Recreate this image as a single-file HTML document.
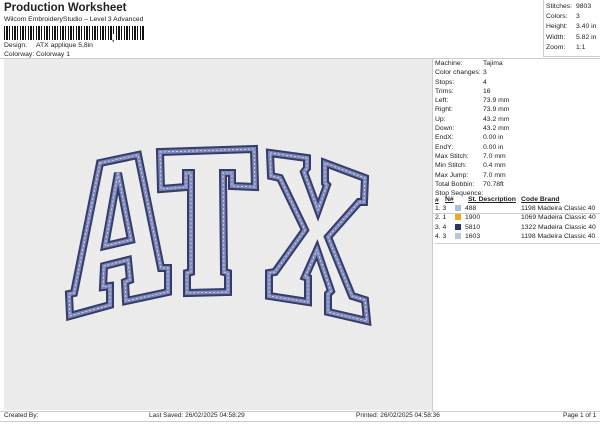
<!DOCTYPE html>
<html><head><style>
*{margin:0;padding:0;box-sizing:border-box}
body{width:600px;height:424px;background:#fff;font-family:"Liberation Sans",sans-serif;color:#222;position:relative;overflow:hidden;font-size:7px}
.a{position:absolute;white-space:nowrap}
.row{position:absolute;left:435px;white-space:nowrap;font-size:6.8px}
.row b{font-weight:normal;display:inline-block;width:48px}
</style></head><body>
<div class="a" style="left:4px;top:2px;font-size:11.5px;font-weight:bold">Production Worksheet</div>
<div class="a" style="left:4px;top:16px;font-size:6.8px">Wilcom EmbroideryStudio – Level 3 Advanced</div>
<div class="a" style="left:4px;top:26px;width:141px;height:14px;background:repeating-linear-gradient(90deg,#111 0 1px,#fff 1px 2px,#111 2px 4px,#fff 4px 5px,#111 5px 6px,#fff 6px 8px)"></div>
<div class="a" style="left:112px;top:34px;font-size:8px;font-weight:bold;background:#fff">,</div>
<div class="a" style="left:4px;top:42px;font-size:6.8px">Design:</div>
<div class="a" style="left:36px;top:42px;font-size:6.8px">ATX applique 5,8in</div>
<div class="a" style="left:4px;top:51px;font-size:6.8px">Colorway:</div>
<div class="a" style="left:36px;top:51px;font-size:6.8px">Colorway 1</div>
<div class="a" style="left:543px;top:0;width:57px;height:57px;border-left:1px solid #ccc;border-bottom:1px solid #ccc"></div>
<div class="a" style="left:0;top:58px;width:600px;border-top:1px solid #ccc"></div>
<div class="a" style="left:546px;top:2px;font-size:6.8px;line-height:10.2px">Stitches:<br>Colors:<br>Height:<br>Width:<br>Zoom:</div>
<div class="a" style="left:576px;top:2px;font-size:6.8px;line-height:10.2px">9803<br>3<br>3.40 in<br>5.82 in<br>1:1</div>
<div class="a" style="left:4px;top:59px;width:428px;height:351px;background:#ebebeb"></div>
<svg class="a" style="left:0;top:0" width="600" height="424">
<defs>
<path id="L" fill-rule="evenodd" d="M100,163 L138,155 L161,268 L168,268 L168,292 L126,301 L125,282 L130,280 L128,260 L104,266 L103,287 L110,286 L110,305 L70,316 L69,294 L74,293 Z M118,173 L105,246 L131,240 Z
M160,152 L254,149 L255,187 L232,186 L232,173 L223,173 L224,272 L228,273 L228,292 L187,293 L187,273 L191,272 L191,173 L186,173 L186,187 L161,189 Z
M270,153 L307,158 L307,168 L304,172 L318,210 L327,185 L325,183 L325,163 L365,178 L364,202 L359,202 L328,237 L352,296 L365,300 L367,321 L328,312 L328,294 L331,291 L317,250 L305,277 L308,278 L308,302 L269,296 L269,273 L275,272 L305,230 L280,178 L271,176 Z"/>
</defs>
<use href="#L" fill="#ececec" stroke="#363c68" stroke-width="8" stroke-linejoin="miter"/>
<use href="#L" fill="none" stroke="#7d87b8" stroke-width="4" stroke-linejoin="miter"/>
<use href="#L" fill="none" stroke="#dfe3f0" stroke-width="0.8" stroke-dasharray="2 2"/>
</svg>
<div class="a" style="left:432px;top:59px;height:352px;border-left:1px solid #ccc"></div>
<div class="row" style="top:59px;line-height:9.3px"><b>Machine:</b>Tajima<br><b>Color changes:</b>3<br><b>Stops:</b>4<br><b>Trims:</b>16<br><b>Left:</b>73.9 mm<br><b>Right:</b>73.9 mm<br><b>Up:</b>43.2 mm<br><b>Down:</b>43.2 mm<br><b>EndX:</b>0.00 in<br><b>EndY:</b>0.00 in<br><b>Max Stitch:</b>7.0 mm<br><b>Min Stitch:</b>0.4 mm<br><b>Max Jump:</b>7.0 mm<br><b>Total Bobbin:</b>70.78ft<br>Stop Sequence:</div>
<div class="a" style="left:432px;top:213px;width:168px;border-top:1px solid #ccc"></div>
<div class="a" style="left:435px;top:196px;font-size:6.8px;line-height:9.3px;font-weight:bold;text-decoration:underline">#</div>
<div class="a" style="left:445px;top:196px;font-size:6.8px;font-weight:bold;text-decoration:underline">N#</div>
<div class="a" style="left:468px;top:196px;font-size:6.8px;font-weight:bold;text-decoration:underline">St. Description</div>
<div class="a" style="left:521px;top:196px;font-size:6.8px;font-weight:bold;text-decoration:underline">Code Brand</div>
<div class="a" style="left:435px;top:204px;font-size:6.8px;line-height:9.3px">1. 3<br>2. 1<br>3. 4<br>4. 3</div>
<div class="a" style="left:455px;top:205px;width:6px;height:6px;background:#a9c0dc"></div>
<div class="a" style="left:455px;top:214px;width:6px;height:6px;background:#f0a818"></div>
<div class="a" style="left:455px;top:224px;width:6px;height:6px;background:#2c2f6c"></div>
<div class="a" style="left:455px;top:233px;width:6px;height:6px;background:#b8c8dc"></div>
<div class="a" style="left:465px;top:204px;font-size:6.8px;line-height:9.3px">488<br>1900<br>5810<br>1603</div>
<div class="a" style="left:521px;top:204px;font-size:6.8px;line-height:9.3px">1198 Madeira Classic 40<br>1069 Madeira Classic 40<br>1322 Madeira Classic 40<br>1198 Madeira Classic 40</div>
<div class="a" style="left:435px;top:243px;width:165px;border-top:1px solid #ccc"></div>
<div class="a" style="left:0;top:411px;width:600px;border-top:1px solid #ccc"></div>
<div class="a" style="left:0;top:421px;width:600px;border-top:1px solid #ccc"></div>
<div class="a" style="left:4px;top:412px;font-size:6.5px">Created By:</div>
<div class="a" style="left:149px;top:412px;font-size:6.5px">Last Saved: 26/02/2025 04:58:29</div>
<div class="a" style="left:356px;top:412px;font-size:6.5px">Printed: 26/02/2025 04:58:36</div>
<div class="a" style="left:563px;top:412px;font-size:6.5px">Page 1 of 1</div>
</body></html>
